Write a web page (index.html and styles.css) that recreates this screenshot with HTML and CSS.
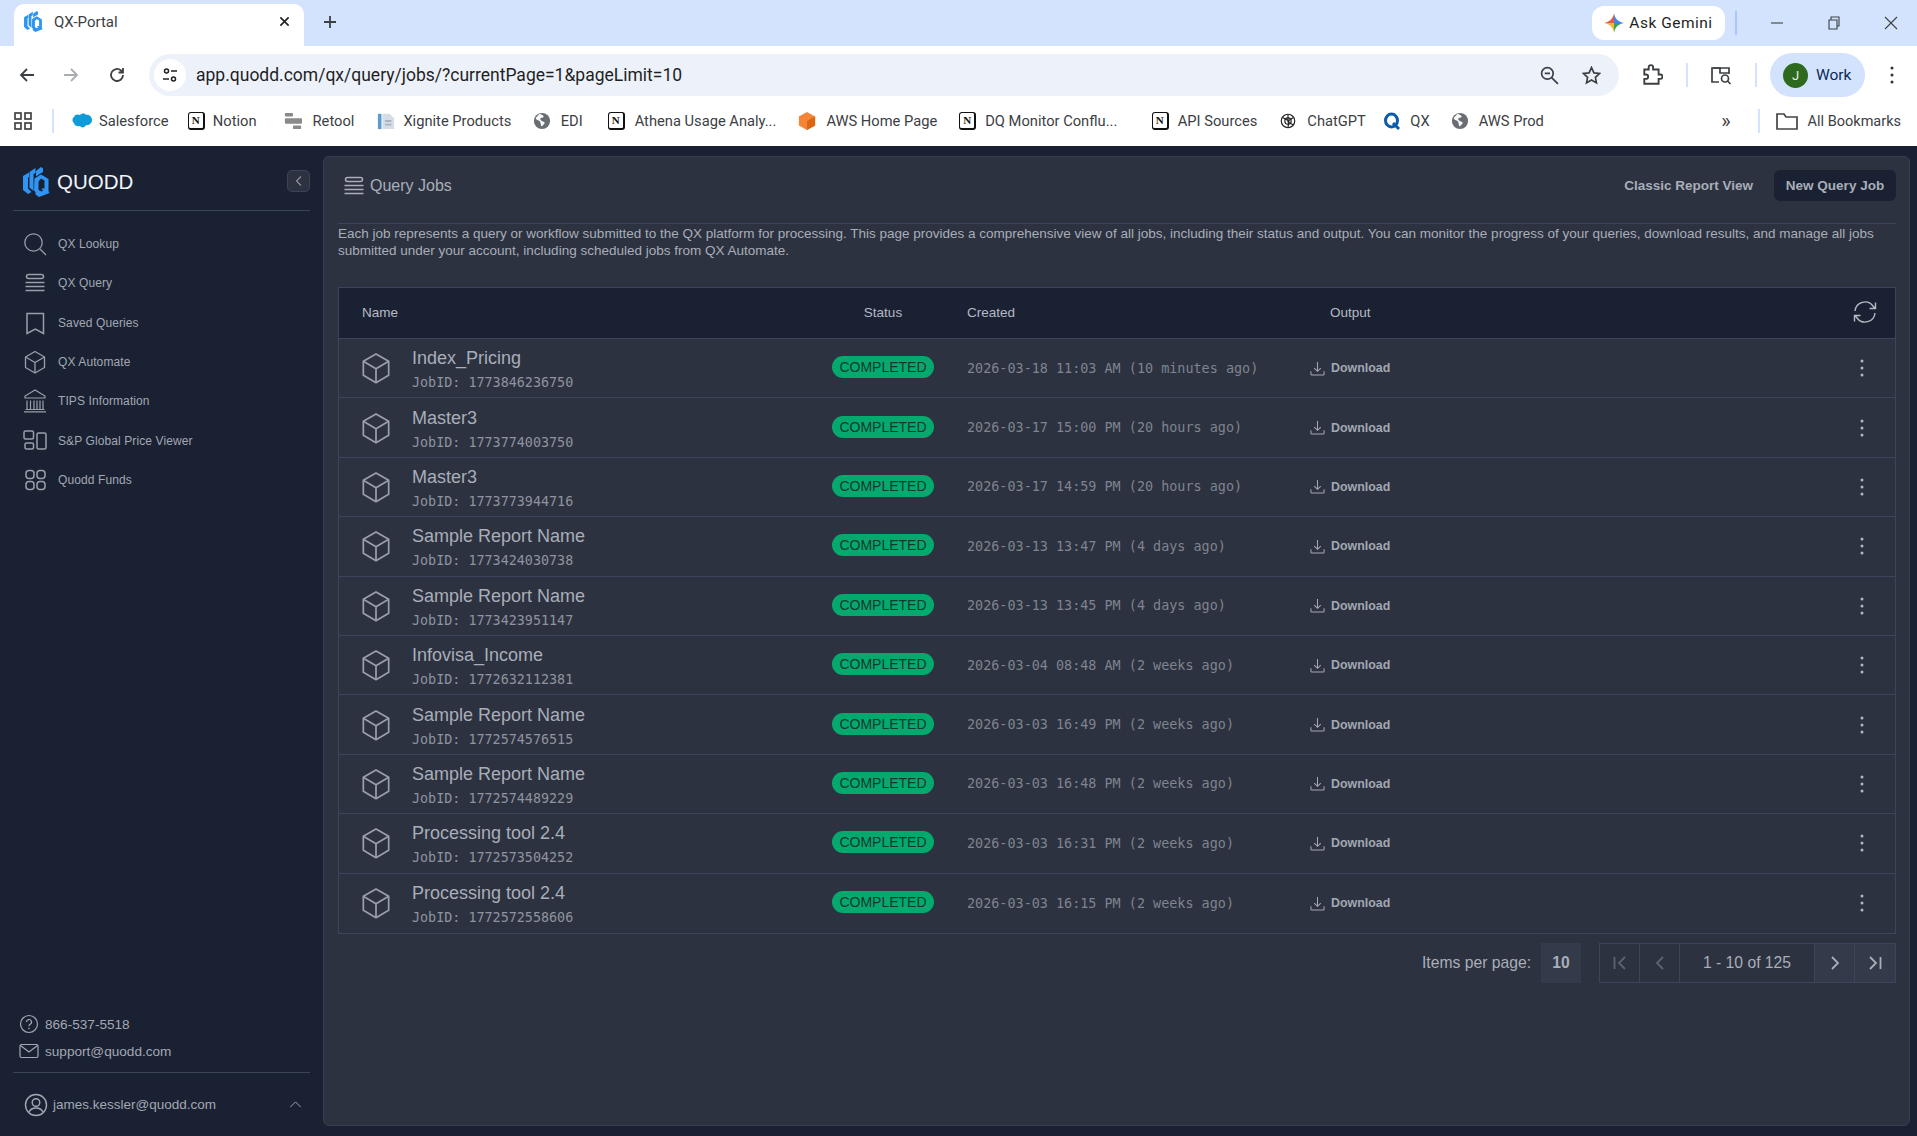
FILE: index.html
```html
<!DOCTYPE html>
<html lang="en">
<head>
<meta charset="utf-8">
<title>QX-Portal</title>
<link rel="stylesheet" href="styles.css">
</head>
<body>
<svg class="defs" width="0" height="0" aria-hidden="true">
  <defs>
    <symbol id="i-logo" viewBox="0 0 27 30">
      <g fill="#2f95f5">
        <path d="M0 9 6 5.500V10L5 10.500V21.500l3.500 3.500-3.500 2L0 23z"/>
        <path d="M6.500 5 12.500 1V6L10.500 7V24L6.500 20.500z"/>
        <path d="M13 4 18 0l2 1.500V5L15 8l-2 1.500z"/>
        <path fill-rule="evenodd" d="M11.500 11.500 18 7.500l7.500 4.500v12l1 2L16 30l-3.500-2.500V25L11 23.500zM15.500 14.500V23l3 1.500 1.500-1-1.500-1.500 1.500-1 1.500 1V13.500l-3.500-2z"/>
      </g>
    </symbol>
    <symbol id="i-search" viewBox="0 0 24 24"><g fill="none" stroke="currentColor" stroke-width="1.300"><circle cx="10.500" cy="10.500" r="8.700"/><path d="m17 17 6 6"/></g></symbol>
    <symbol id="i-lines" viewBox="0 0 24 24"><g fill="none" stroke="currentColor" stroke-width="1.500"><rect x="3.500" y="3.500" width="17" height="4" rx="2"/><path d="M2.500 11.500h19M2.500 15.500h19M2.500 19.500h19"/></g></symbol>
    <symbol id="i-bookmark" viewBox="0 0 24 24"><path fill="none" stroke="currentColor" stroke-width="1.500" d="M4 2.500h16.500v20l-8.200-4.300-8.300 4.300z"/></symbol>
    <symbol id="i-cube" viewBox="0 0 24 24"><g fill="none" stroke="currentColor" stroke-width="1.300" stroke-linejoin="round"><path d="m12 1.500 9.500 5.500v10.500l-9.500 5.500-9.500-5.500V7z"/><path d="m2.500 7 9.500 5.500L21.500 7M12 12.500V23"/></g></symbol>
    <symbol id="i-bank" viewBox="0 0 24 24"><g fill="none" stroke="currentColor" stroke-width="1.200"><path d="M12 1 2 7v2h20V7zM4 11.500V20M7.500 11.500V20M11 11.500V20M14 11.500V20M17 11.500V20M20 11.500V20M2.500 20.500h19M1 22.800h22"/></g></symbol>
    <symbol id="i-panels" viewBox="0 0 24 24"><g fill="none" stroke="currentColor" stroke-width="1.500"><rect x="1" y="2" width="9.500" height="8" rx="1.500"/><rect x="2" y="14" width="8.500" height="6" rx="1.500"/><rect x="14" y="4" width="9" height="16" rx="1.500"/></g></symbol>
    <symbol id="i-grid" viewBox="0 0 24 24"><g fill="none" stroke="currentColor" stroke-width="1.500"><rect x="3" y="2.500" width="8" height="8" rx="3"/><rect x="14" y="2.500" width="8" height="8" rx="3"/><rect x="3" y="13.500" width="8" height="8" rx="3"/><rect x="14" y="13.500" width="8" height="8" rx="3"/></g></symbol>
    <symbol id="i-download" viewBox="0 0 16 16"><g fill="none" stroke="currentColor" stroke-width="1.100"><path d="M8 1v10M4.500 7.500 8 11l3.500-3.500M1 11v3.200c0 .5.300.8.800.8h12.400c.5 0 .8-.3.800-.8V11"/></g></symbol>
    <symbol id="i-dots" viewBox="0 0 4 20"><g fill="currentColor"><circle cx="2" cy="3" r="1.500"/><circle cx="2" cy="10" r="1.500"/><circle cx="2" cy="17" r="1.500"/></g></symbol>
    <symbol id="i-globe" viewBox="0 0 20 20"><circle cx="10" cy="10" r="9" fill="#6a6e73"/><path fill="#fff" d="M7 2c2 1 4 1 5 3-1 2-4 1-4 3s4 2 5 4c0 2-2 2-3 4-2-1-1-3-2-5S3 9 3 7c1-2 3-3 4-5z" opacity=".95"/></symbol>
  </defs>
</svg>

<header class="browser">
  <div class="tabstrip">
    <div class="tab">
      <svg class="fav"><use href="#i-logo"/></svg>
      <span class="tab-title">QX-Portal</span>
      <svg class="tab-x" viewBox="0 0 12 12"><path d="m1.500 1.500 9 9M10.500 1.500l-9 9"/></svg>
    </div>
    <svg class="tab-plus" viewBox="0 0 14 14"><path d="M7 1v12M1 7h12"/></svg>
    <div class="strip-right">
      <div class="gemini">
        <svg class="spark" viewBox="0 0 20 20">
          <path fill="#4285f4" d="M10 0c.8 5.500 4.200 9 10 10h-10z"/>
          <path fill="#e5584a" d="M10 0c-.8 5.500-4.200 9-10 10h10z"/>
          <path fill="#f6b73c" d="M0 10c5.800 1 9.200 4.500 10 10v-10z"/>
          <path fill="#34a853" d="M20 10c-5.800 1-9.200 4.500-10 10v-10z"/>
        </svg>
        <span>Ask Gemini</span>
      </div>
      <span class="strip-sep"></span>
      <svg class="win" viewBox="0 0 14 14"><path d="M1 7h12"/></svg>
      <svg class="win" viewBox="0 0 14 14"><path d="M2 4h8v9H2zM4 4V1h8v9h-2"/></svg>
      <svg class="win" viewBox="0 0 14 14"><path d="m1 1 12 12M13 1 1 13"/></svg>
    </div>
  </div>
  <div class="toolbar">
    <svg class="nav" viewBox="0 0 16 16"><path d="M15 8H2M8 2 2 8l6 6"/></svg>
    <svg class="nav nav-off" viewBox="0 0 16 16"><path d="M1 8h13M8 2l6 6-6 6"/></svg>
    <svg class="nav nav-reload" viewBox="0 0 16 16"><path d="M14 8a6 6 0 1 1-2-4.500L14 5.500M14 1v4.500H9.500"/></svg>
    <div class="omni">
      <span class="omni-chip">
        <svg viewBox="0 0 16 16"><g fill="none" stroke="#1f1f1f" stroke-width="1.500"><circle cx="4.500" cy="4" r="2"/><path d="M9 4h6M1 12h6"/><circle cx="11.500" cy="12" r="2"/></g></svg>
      </span>
      <span class="url">app.quodd.com/qx/query/jobs/?currentPage=1&amp;pageLimit=10</span>
      <svg class="omni-ico" viewBox="0 0 18 18"><g fill="none" stroke="#3c4043" stroke-width="1.600"><circle cx="7" cy="7" r="5.500"/><path d="m11 11 6 6M4.500 7h5"/></g></svg>
      <svg class="omni-ico" viewBox="0 0 18 18"><path fill="none" stroke="#3c4043" stroke-width="1.600" d="m9 1.500 2.300 5 5.200.6-3.800 3.600 1 5.300L9 13.300 4.300 16l1-5.300L1.500 7.100l5.200-.6z"/></svg>
    </div>
    <svg class="tool-ico" viewBox="0 0 20 20"><path fill="none" stroke="#3c4043" stroke-width="1.700" d="M3 5h4V3a2 2 0 0 1 4 0v2h5v4.500h1.500a2 2 0 0 1 0 4H16V18H3v-4.500h1.500a2 2 0 0 0 0-4H3z"/></svg>
    <span class="tool-sep"></span>
    <svg class="tool-ico" viewBox="0 0 22 20"><g fill="none" stroke="#3c4043" stroke-width="1.700"><path d="M9 17H2V3h17v6"/><path d="M3 3h7v5h9"/><circle cx="15" cy="13.500" r="3.500"/><path d="m17.500 16 3 3"/></g></svg>
    <span class="tool-sep"></span>
    <div class="profile"><span class="avatar">J</span><span>Work</span></div>
    <svg class="menu" viewBox="0 0 4 20"><use href="#i-dots"/></svg>
  </div>
  <div class="bookmarks">
    <svg class="apps" viewBox="0 0 18 18"><g fill="none" stroke="#444" stroke-width="1.700"><rect x="1" y="1" width="6" height="6"/><rect x="11" y="1" width="6" height="6"/><rect x="1" y="11" width="6" height="6"/><rect x="11" y="11" width="6" height="6"/></g></svg>
    <span class="bm-sep"></span>
    <div class="bm bm-sf"><svg class="bm-ico" viewBox="0 0 20 16"><path fill="#0f9bd7" d="M8 2c2-2 5-2 6 0 3-1 6 2 6 5s-3 6-6 5c-1 3-5 3-6 1-3 1-6-1-6-3-2-1-2-5 0-6 1-3 4-3 6-2z"/></svg><span>Salesforce</span></div>
    <div class="bm bm-no"><span class="notion">N</span><span>Notion</span></div>
    <div class="bm bm-re"><svg class="bm-ico" viewBox="0 0 20 20"><g fill="#8a8a8a"><rect x="1" y="1" width="9" height="4" rx="1"/><rect x="1" y="7" width="19" height="6" rx="1"/><rect x="10" y="15" width="9" height="4" rx="1"/></g></svg><span>Retool</span></div>
    <div class="bm bm-xi"><svg class="bm-ico" viewBox="0 0 20 20"><path fill="#5c9bd1" d="M1 2h4v17H1z"/><path fill="#d6dde6" d="M6 2h8l5 5v12H6z"/><path fill="#aab4c0" d="M9 9h7v2H9zM9 13h7v2H9z"/></svg><span>Xignite Products</span></div>
    <div class="bm bm-ed"><svg class="bm-ico"><use href="#i-globe"/></svg><span>EDI</span></div>
    <div class="bm bm-at"><span class="notion">N</span><span>Athena Usage Analy...</span></div>
    <div class="bm bm-aw"><svg class="bm-ico" viewBox="0 0 20 20"><path fill="#f58536" d="m10 0 9 5v10l-9 5-9-5V5z"/><path fill="#d86613" d="m10 10 9-5v10l-9 5z"/></svg><span>AWS Home Page</span></div>
    <div class="bm bm-dq"><span class="notion">N</span><span>DQ Monitor Conflu...</span></div>
    <div class="bm bm-ap"><span class="notion">N</span><span>API Sources</span></div>
    <div class="bm bm-ch"><svg class="bm-ico" viewBox="0 0 20 20"><g fill="none" stroke="#222" stroke-width="1.300"><circle cx="10" cy="10" r="7.500"/><path d="M10 3v8l6 3.500M4 6l7 4-1 7M16 6l-6 4"/><circle cx="10" cy="10" r="3.500"/></g></svg><span>ChatGPT</span></div>
    <div class="bm bm-qx"><svg class="bm-ico" viewBox="0 0 18 18"><g fill="none" stroke="#0b5cad" stroke-width="3"><ellipse cx="8.500" cy="8.500" rx="6" ry="6.500"/><path d="m10 11 6 6"/></g></svg><span>QX</span></div>
    <div class="bm"><svg class="bm-ico"><use href="#i-globe"/></svg><span>AWS Prod</span></div>
    <span class="bm-more">»</span>
    <span class="bm-sep bm-sep-end"></span>
    <div class="bm bm-all"><svg class="bm-folder" viewBox="0 0 22 18"><path fill="none" stroke="#444" stroke-width="1.700" d="M1 2h7l2 3h11v12H1z"/></svg><span>All Bookmarks</span></div>
  </div>
</header>

<div class="app">
  <aside class="side">
    <div class="brand">
      <svg class="brand-logo"><use href="#i-logo"/></svg>
      <span class="brand-name">QUODD</span>
      <span class="collapse"><svg viewBox="0 0 8 12"><path d="M6 1.500 1.500 6 6 10.500"/></svg></span>
    </div>
    <nav class="menu-list">
      <a class="item"><svg class="item-ico"><use href="#i-search"/></svg>QX Lookup</a>
      <a class="item"><svg class="item-ico"><use href="#i-lines"/></svg>QX Query</a>
      <a class="item"><svg class="item-ico"><use href="#i-bookmark"/></svg>Saved Queries</a>
      <a class="item"><svg class="item-ico"><use href="#i-cube"/></svg>QX Automate</a>
      <a class="item"><svg class="item-ico"><use href="#i-bank"/></svg>TIPS Information</a>
      <a class="item"><svg class="item-ico"><use href="#i-panels"/></svg>S&amp;P Global Price Viewer</a>
      <a class="item"><svg class="item-ico"><use href="#i-grid"/></svg>Quodd Funds</a>
    </nav>
    <div class="contact">
      <div class="contact-row"><svg viewBox="0 0 20 20"><g fill="none" stroke="currentColor" stroke-width="1.200"><circle cx="10" cy="10" r="8.500"/><path d="M7.500 8a2.500 2.500 0 1 1 3.700 2.200c-.8.500-1.200 1-1.200 2"/></g><circle cx="10" cy="14.500" r=".8" fill="currentColor"/></svg><span>866-537-5518</span></div>
      <div class="contact-row"><svg viewBox="0 0 20 20"><g fill="none" stroke="currentColor" stroke-width="1.200"><rect x="1" y="3.500" width="18" height="13" rx="1.500"/><path d="m1.500 4.500 8.500 6.500 8.500-6.500"/></g></svg><span>support@quodd.com</span></div>
    </div>
    <div class="user">
      <svg class="user-ico" viewBox="0 0 24 24"><g fill="none" stroke="currentColor" stroke-width="1.400"><circle cx="12" cy="12" r="10.500"/><circle cx="12" cy="9.500" r="3.800"/><path d="M5 19c1.500-3 4-4 7-4s5.500 1 7 4"/></g></svg>
      <span class="user-mail">james.kessler@quodd.com</span>
      <svg class="user-chev" viewBox="0 0 14 8"><path d="m1 7 6-6 6 6"/></svg>
    </div>
  </aside>

  <main class="card">
    <div class="card-head">
      <svg class="head-ico"><use href="#i-lines"/></svg>
      <h1 class="head-title">Query Jobs</h1>
      <a class="btn-link">Classic Report View</a>
      <a class="btn-dark">New Query Job</a>
    </div>
    <p class="desc">Each job represents a query or workflow submitted to the QX platform for processing. This page provides a comprehensive view of all jobs, including their status and output. You can monitor the progress of your queries, download results, and manage all jobs submitted under your account, including scheduled jobs from QX Automate.</p>
    <section class="table">
      <div class="thead">
        <span class="th-name">Name</span>
        <span class="th-status">Status</span>
        <span>Created</span>
        <span class="th-out">Output</span>
        <svg class="refresh" viewBox="0 0 24 24"><g fill="none" stroke="currentColor" stroke-width="1.400"><path d="M2 11a10 10 0 0 1 18-5l2 2.500M22.500 2.500v6h-6"/><path d="M22 13a10 10 0 0 1-18 5l-2-2.500M1.500 21.500v-6h6"/></g></svg>
      </div>

      <div class="row"><svg class="cube"><use href="#i-cube"/></svg><div class="job"><div class="job-name">Index_Pricing</div><div class="job-id">JobID: 1773846236750</div></div><span class="badge">COMPLETED</span><span class="date">2026-03-18 11:03 AM (10 minutes ago)</span><a class="dl"><svg><use href="#i-download"/></svg>Download</a><svg class="dots"><use href="#i-dots"/></svg></div>
      <div class="row"><svg class="cube"><use href="#i-cube"/></svg><div class="job"><div class="job-name">Master3</div><div class="job-id">JobID: 1773774003750</div></div><span class="badge">COMPLETED</span><span class="date">2026-03-17 15:00 PM (20 hours ago)</span><a class="dl"><svg><use href="#i-download"/></svg>Download</a><svg class="dots"><use href="#i-dots"/></svg></div>
      <div class="row"><svg class="cube"><use href="#i-cube"/></svg><div class="job"><div class="job-name">Master3</div><div class="job-id">JobID: 1773773944716</div></div><span class="badge">COMPLETED</span><span class="date">2026-03-17 14:59 PM (20 hours ago)</span><a class="dl"><svg><use href="#i-download"/></svg>Download</a><svg class="dots"><use href="#i-dots"/></svg></div>
      <div class="row"><svg class="cube"><use href="#i-cube"/></svg><div class="job"><div class="job-name">Sample Report Name</div><div class="job-id">JobID: 1773424030738</div></div><span class="badge">COMPLETED</span><span class="date">2026-03-13 13:47 PM (4 days ago)</span><a class="dl"><svg><use href="#i-download"/></svg>Download</a><svg class="dots"><use href="#i-dots"/></svg></div>
      <div class="row"><svg class="cube"><use href="#i-cube"/></svg><div class="job"><div class="job-name">Sample Report Name</div><div class="job-id">JobID: 1773423951147</div></div><span class="badge">COMPLETED</span><span class="date">2026-03-13 13:45 PM (4 days ago)</span><a class="dl"><svg><use href="#i-download"/></svg>Download</a><svg class="dots"><use href="#i-dots"/></svg></div>
      <div class="row"><svg class="cube"><use href="#i-cube"/></svg><div class="job"><div class="job-name">Infovisa_Income</div><div class="job-id">JobID: 1772632112381</div></div><span class="badge">COMPLETED</span><span class="date">2026-03-04 08:48 AM (2 weeks ago)</span><a class="dl"><svg><use href="#i-download"/></svg>Download</a><svg class="dots"><use href="#i-dots"/></svg></div>
      <div class="row"><svg class="cube"><use href="#i-cube"/></svg><div class="job"><div class="job-name">Sample Report Name</div><div class="job-id">JobID: 1772574576515</div></div><span class="badge">COMPLETED</span><span class="date">2026-03-03 16:49 PM (2 weeks ago)</span><a class="dl"><svg><use href="#i-download"/></svg>Download</a><svg class="dots"><use href="#i-dots"/></svg></div>
      <div class="row"><svg class="cube"><use href="#i-cube"/></svg><div class="job"><div class="job-name">Sample Report Name</div><div class="job-id">JobID: 1772574489229</div></div><span class="badge">COMPLETED</span><span class="date">2026-03-03 16:48 PM (2 weeks ago)</span><a class="dl"><svg><use href="#i-download"/></svg>Download</a><svg class="dots"><use href="#i-dots"/></svg></div>
      <div class="row"><svg class="cube"><use href="#i-cube"/></svg><div class="job"><div class="job-name">Processing tool 2.4</div><div class="job-id">JobID: 1772573504252</div></div><span class="badge">COMPLETED</span><span class="date">2026-03-03 16:31 PM (2 weeks ago)</span><a class="dl"><svg><use href="#i-download"/></svg>Download</a><svg class="dots"><use href="#i-dots"/></svg></div>
      <div class="row"><svg class="cube"><use href="#i-cube"/></svg><div class="job"><div class="job-name">Processing tool 2.4</div><div class="job-id">JobID: 1772572558606</div></div><span class="badge">COMPLETED</span><span class="date">2026-03-03 16:15 PM (2 weeks ago)</span><a class="dl"><svg><use href="#i-download"/></svg>Download</a><svg class="dots"><use href="#i-dots"/></svg></div>
    </section>
    <div class="pager">
      <span class="per-label">Items per page:</span>
      <span class="per-val">10</span>
      <div class="pages">
        <span class="pg pg-off"><svg viewBox="0 0 16 16"><path d="M2.500 2v12M13 2 7 8l6 6"/></svg></span>
        <span class="pg pg-off"><svg viewBox="0 0 16 16"><path d="M11 2 5 8l6 6"/></svg></span>
        <span class="pg-range">1 - 10 of 125</span>
        <span class="pg pg-on"><svg viewBox="0 0 16 16"><path d="m5 2 6 6-6 6"/></svg></span>
        <span class="pg pg-on"><svg viewBox="0 0 16 16"><path d="m3 2 6 6-6 6M13.500 2v12"/></svg></span>
      </div>
    </div>
  </main>
</div>
</body>
</html>
```
FILE: styles.css
```css
* { box-sizing: border-box; }
html, body { margin: 0; height: 100%; }
body {
  width: 1917px;
  height: 1136px;
  overflow: hidden;
  display: flex;
  flex-direction: column;
  background: #1a2133;
  font-family: "Liberation Sans", Arial, sans-serif;
}
.defs { position: absolute; }
a { color: inherit; text-decoration: none; }

/* browser chrome */
.browser { flex: 0 0 146px; display: flex; flex-direction: column; background: #fff; font-family: Roboto, sans-serif; color: #1f1f1f; }
.tabstrip { height: 46px; flex: none; background: #d3e3fd; display: flex; align-items: center; padding-left: 14px; }
.tab { align-self: flex-end; width: 290px; height: 42px; background: #fff; border-radius: 10px 10px 0 0; display: flex; align-items: center; padding: 0 14px 7px 10px; margin-right: 19px; }
.fav { width: 19px; height: 21px; margin-right: 11px; }
.tab-title { flex: 1; font-size: 15px; color: #3c4043; }
.tab-x { width: 11px; height: 11px; fill: none; stroke: #222; stroke-width: 1.800; }
.tab-plus { width: 14px; height: 14px; margin-bottom: 2px; fill: none; stroke: #3c4043; stroke-width: 1.800; }
.strip-right { margin-left: auto; display: flex; align-items: center; padding-right: 19px; }
.gemini { height: 34px; width: 133px; background: #fff; border-radius: 12px; display: flex; align-items: center; justify-content: center; gap: 5px; font-size: 15.500px; letter-spacing: .5px; margin-right: 10px; }
.spark { width: 20px; height: 20px; }
.strip-sep { width: 2px; height: 24px; background: #a8c7fa; margin-right: 33px; }
.win { width: 14px; height: 14px; margin-right: 43px; fill: none; stroke: #3c4043; stroke-width: 1.100; }
.win:last-child { margin-right: 0; }

.toolbar { height: 58px; flex: none; display: flex; align-items: center; padding-left: 19px; padding-right: 12px; }
.nav { width: 16px; height: 16px; margin-right: 28px; fill: none; stroke: #3c4043; stroke-width: 1.800; }
.nav-off { stroke: #a9adb2; margin-right: 30px; }
.nav-reload { margin-right: 24px; }
.omni { width: 1470px; height: 42px; background: #edf2fa; border-radius: 21px; display: flex; align-items: center; padding: 0 13px 0 5px; }
.omni-chip { width: 32px; height: 32px; border-radius: 50%; background: #fff; display: flex; align-items: center; justify-content: center; margin-right: 10px; }
.omni-chip svg { width: 16px; height: 16px; }
.url { flex: 1; font-size: 17.500px; color: #1f1f1f; }
.omni-ico { width: 19px; height: 19px; margin-left: 23px; }
.omni-ico:last-child { margin-right: 5px; }
.tool-ico { width: 22px; height: 22px; margin-left: 22px; margin-right: 23px; }
.tool-sep { width: 2px; height: 24px; background: #d3e3fd; }
.profile { width: 95px; height: 44px; border-radius: 22px; background: #d3e3fd; margin-left: 13px; display: flex; align-items: center; gap: 8px; padding-left: 13px; font-size: 15.500px; color: #0b2a5b; }
.avatar { width: 25px; height: 25px; border-radius: 50%; background: #2d6a1f; color: #e8f0e0; font-size: 13px; display: flex; align-items: center; justify-content: center; }
.menu { width: 4px; height: 20px; margin-left: 25px; color: #333; }

.bookmarks { height: 42px; flex: none; display: flex; align-items: center; padding: 0 16px 8px 14px; font-size: 14.700px; color: #3c4043; }
.apps { width: 18px; height: 18px; margin-right: 20px; }
.bm-sep { width: 2px; height: 24px; background: #d3e3fd; margin-right: 18px; }
.bm-sep-end { margin-right: 16px; }
.bm { display: flex; align-items: center; gap: 10px; margin-right: 22px; white-space: nowrap; }
.bm-sf { gap: 7px; margin-right: 19.400px; }
.bm-no { gap: 8px; margin-right: 27px; }
.bm-re { gap: 11px; margin-right: 23px; }
.bm-xi { gap: 8px; margin-right: 21.400px; }
.bm-ed { margin-right: 25px; }
.bm-dq { gap: 9px; margin-right: 34.500px; }
.bm-ap { gap: 9px; }
.bm-ch { margin-right: 17.500px; }
.bm-qx { gap: 9px; margin-right: 21px; }
.bm-ico { width: 18px; height: 18px; }
.bm-sf .bm-ico { width: 20px; }
.notion { width: 17px; height: 18px; border: 1.500px solid #111; border-right-width: 2.500px; border-bottom-width: 2.500px; border-radius: 3px; font: bold 11px/14px "Liberation Serif", serif; color: #111; text-align: center; background: #fff; }
.bm-more { margin-left: auto; font-size: 20px; margin-right: 27px; line-height: 1; }
.bm-all { margin-right: 0; gap: 10px; font-size: 14.500px; }
.bm-folder { width: 22px; height: 18px; }

/* app */
.app { flex: 1; min-height: 0; display: flex; padding: 10px 7px 0 0; }
.side { flex: 0 0 323px; display: flex; flex-direction: column; padding: 0 13px; color: #a3a8b2; }
.brand { height: 55px; flex: none; display: flex; align-items: center; border-bottom: 1px solid #3b4458; padding-left: 10px; margin-bottom: 13px; }
.brand-logo { width: 27px; height: 30px; margin-top: -2px; }
.brand-name { margin: -2px 0 0 7px; flex: 1; font-size: 20.500px; color: #f1f3f6; }
.collapse { width: 23px; height: 22px; margin-top: -4px; border: 1px solid #3b4458; background: #2c3240; border-radius: 5px; display: flex; align-items: center; justify-content: center; }
.collapse svg { width: 8px; height: 12px; fill: none; stroke: #8d929c; stroke-width: 1.200; }
.menu-list { display: flex; flex-direction: column; flex: 1; }
.item { height: 39.450px; display: flex; align-items: center; gap: 11px; padding-left: 10px; font-size: 12px; letter-spacing: .1px; }
.item-ico { width: 24px; height: 24px; color: #9a9fa9; }
.contact { display: flex; flex-direction: column; gap: 9px; padding: 0 0 12px 6px; font-size: 13.600px; border-bottom: 1px solid #3b4458; }
.contact-row { height: 18px; display: flex; align-items: center; gap: 6px; }
.contact-row svg { width: 20px; height: 20px; }
.user { height: 63px; flex: none; display: flex; align-items: center; padding-left: 11px; padding-right: 8px; font-size: 13.500px; }
.user-ico { width: 24px; height: 24px; margin-right: 5px; }
.user-mail { flex: 1; }
.user-chev { width: 13px; height: 7px; fill: none; stroke: currentColor; stroke-width: 1.100; }

.card { flex: 1; min-width: 0; margin-bottom: 10px; background: #2c3240; border: 1px solid #363e52; border-radius: 6px; padding: 0 13px 0 14px; color: #a9aeb8; display: flex; flex-direction: column; }
.card-head { height: 67px; flex: none; display: flex; align-items: center; border-bottom: 1px solid #3d455c; padding: 0 0 9px 4px; }
.head-ico { width: 24px; height: 24px; margin-right: 4px; }
.head-title { flex: 1; margin: 0; font-size: 16px; font-weight: 400; }
.btn-link { font-size: 13.500px; font-weight: 700; margin-right: 21px; }
.btn-dark { width: 122px; height: 31px; background: #1a2133; border-radius: 6px; font-size: 13.500px; font-weight: 700; display: flex; align-items: center; justify-content: center; }
.desc { margin: 0; flex: none; height: 63px; padding: 1px 10px 0 0; font-size: 13.500px; line-height: 17px; }

.table { flex: none; border: 1px solid #3d455c; }
.thead, .row { display: grid; align-items: center; }
.thead { height: 51px; padding-bottom: 2px; background: #1a2133; border-bottom: 1px solid #3d455c; font-size: 13.500px; color: #b6bac3; grid-template-columns: 493px 135px 343px 1fr auto; padding-right: 18px; }
.th-name { padding-left: 23px; }
.th-status { width: 102px; text-align: center; }
.th-out { padding-left: 20px; }
.refresh { width: 24px; height: 24px; }
.row { height: 59.400px; grid-template-columns: 73px 420px 135px 343px 1fr auto; border-bottom: 1px solid #3d455c; padding-right: 31px; }
.row:last-child { border-bottom: 0; }
.cube { width: 32px; height: 32px; margin-left: 21px; color: #9a9fa9; }
.job { padding-top: 3px; }
.job-name { font-size: 18px; line-height: 21px; color: #a9aeb8; margin-bottom: 5px; }
.job-id { font: 13.400px/17px "DejaVu Sans Mono", monospace; color: #8f949e; }
.badge { width: 102px; height: 22px; margin-bottom: 2px; border-radius: 11px; background: #05a96e; color: #0d3a30; font-size: 14px; display: flex; align-items: center; justify-content: center; }
.date { font: 13.440px/17px "DejaVu Sans Mono", monospace; color: #7f848e; }
.dl { display: flex; align-items: center; gap: 6px; font-size: 12.400px; font-weight: 700; color: #a3a8b2; }
.dl svg { width: 15px; height: 15px; }
.dots { width: 4px; height: 20px; color: #b3b7bf; }

.pager { height: 40px; flex: none; display: flex; align-items: center; justify-content: flex-end; margin-top: 9px; font-size: 15.700px; color: #a9aeb8; }
.per-label { margin-right: 10px; }
.per-val { width: 40px; height: 40px; background: #333a49; font-weight: 700; display: flex; align-items: center; justify-content: center; margin-right: 18px; }
.pages { display: flex; height: 40px; border: 1px solid #3d455c; }
.pg { width: 40px; display: flex; align-items: center; justify-content: center; border-right: 1px solid #3d455c; }
.pg:last-child { border-right: 0; }
.pg svg { width: 16px; height: 16px; fill: none; stroke-width: 1.800; }
.pg-off svg { stroke: #5d6370; }
.pg-on { background: #333a49; }
.pg-on svg { stroke: #a9aeb8; }
.pg-range { width: 135px; display: flex; align-items: center; justify-content: center; border-right: 1px solid #3d455c; white-space: nowrap; }
```
